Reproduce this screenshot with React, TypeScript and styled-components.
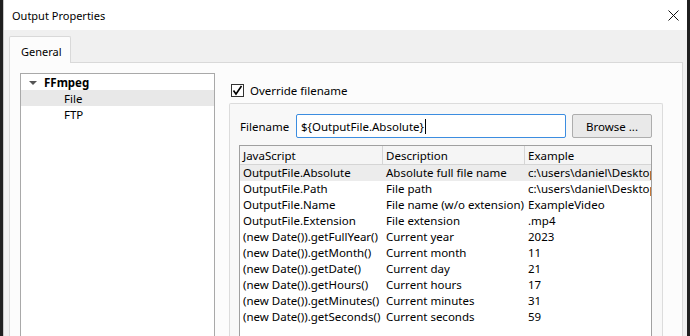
import React from "react";
import styled, { createGlobalStyle } from "styled-components";

const Global = createGlobalStyle`
  html, body { margin: 0; padding: 0; background: #1f1f1f; }
  body { font-family: "Noto Sans", "Open Sans", sans-serif; font-size: 11.5px; color: #000; }
`;

const Dialog = styled.div`
  margin-left: 3px;
  width: 684px;
  height: 336px;
  overflow: hidden;
  display: flex;
  flex-direction: column;
  background: #f0f0f0;
  border-left: 1px solid #c8c8c8;
  box-sizing: border-box;
`;

const TitleBar = styled.div`
  height: 30px;
  flex: none;
  background: #ffffff;
  display: flex;
  align-items: center;
  justify-content: space-between;
  padding: 0 8px 0 8px;
  font-size: 11px;
`;

const Close = styled.svg`
  width: 11px;
  height: 11px;
`;

const Body = styled.div`
  flex: 1;
  display: flex;
  flex-direction: column;
  padding: 6px 4px 0 5px;
  min-height: 0;
`;

const TabBar = styled.div`
  display: flex;
  height: 26px;
  flex: none;
`;

const Tab = styled.div`
  width: 62px;
  height: 27px;
  box-sizing: border-box;
  border: 1px solid #d9d9d9;
  border-bottom: none;
  border-radius: 2px 2px 0 0;
  background: #fcfcfc;
  display: flex;
  align-items: center;
  padding-left: 11px;
  padding-top: 2px;
  font-size: 11px;
  position: relative;
  z-index: 1;
`;

const Pane = styled.div`
  flex: 1;
  border: 1px solid #d9d9d9;
  border-bottom: none;
  background: #fcfcfc;
  display: flex;
  padding: 10px 0 0 10px;
  gap: 14px;
  min-height: 0;
`;

const Tree = styled.div`
  width: 195px;
  flex: none;
  background: #ffffff;
  border: 1px solid #a9a9a9;
  border-bottom: none;
  box-sizing: border-box;
  padding-top: 0;
`;

const TreeRow = styled.div<{ $level: number; $selected?: boolean; $bold?: boolean }>`
  height: 16px;
  line-height: 16px;
  display: flex;
  align-items: center;
  padding-left: ${(p) => 23 + p.$level * 20}px;
  padding-top: 1px;
  box-sizing: border-box;
  background: ${(p) => (p.$selected ? "#e8e8e8" : "transparent")};
  font-weight: ${(p) => (p.$bold ? 700 : 400)};
  position: relative;
`;

const Arrow = styled.span`
  position: absolute;
  left: 8px;
  top: 7px;
  width: 0;
  height: 0;
  border-left: 4px solid transparent;
  border-right: 4px solid transparent;
  border-top: 4px solid #555;
`;

const Right = styled.div`
  width: 434px;
  flex: none;
  display: flex;
  flex-direction: column;
`;

const CheckRow = styled.label`
  display: flex;
  align-items: center;
  height: 14px;
  margin: 10px 0 6px 2px;
  gap: 6px;
`;

const CheckBox = styled.span`
  width: 13px;
  height: 13px;
  box-sizing: border-box;
  border: 1px solid #333;
  background: #fff;
  display: flex;
  align-items: center;
  justify-content: center;
`;

const Frame = styled.div`
  flex: 1;
  border: 1px solid #dcdcdc;
  border-bottom: none;
  border-radius: 2px 2px 0 0;
  background: #f8f8f8;
  padding: 10px 10px 0 9px;
  display: flex;
  flex-direction: column;
  gap: 7px;
`;

const FileRow = styled.div`
  display: flex;
  align-items: center;
  gap: 6px;
  height: 24px;
`;

const Label = styled.span`
  width: 50px;
  padding-left: 1px;
`;

const Input = styled.div`
  width: 270px;
  height: 24px;
  box-sizing: border-box;
  border: 1px solid #3c8de0;
  border-radius: 2px;
  background: #fff;
  display: flex;
  align-items: center;
  padding-left: 4px;
`;

const Caret = styled.span`
  width: 1px;
  height: 15px;
  background: #000;
  margin-left: 1px;
`;

const Button = styled.div`
  width: 80px;
  height: 24px;
  box-sizing: border-box;
  border: 1px solid #adadad;
  border-radius: 2px;
  background: #e9e9e9;
  display: flex;
  align-items: center;
  justify-content: center;
`;

const Table = styled.div`
  flex: 1;
  border: 1px solid #a0a0a0;
  border-bottom: none;
  background: #fff;
  display: flex;
  flex-direction: column;
`;

const Header = styled.div`
  display: grid;
  grid-template-columns: 143px 142px 1fr;
  height: 18px;
  border-bottom: 1px solid #d5d5d5;
  background: #f5f5f5;
`;

const HeadCell = styled.div`
  border-right: 1px solid #d5d5d5;
  padding-left: 3px;
  display: flex;
  align-items: center;
  &:last-child { border-right: none; }
`;

const Row = styled.div<{ $selected?: boolean }>`
  display: grid;
  grid-template-columns: 143px 142px 1fr;
  height: 16px;
  line-height: 16px;
  background: ${(p) => (p.$selected ? "#ececec" : "transparent")};
`;

const Cell = styled.div`
  padding-left: 3px;
  white-space: nowrap;
  overflow: hidden;
`;

const rows: [string, string, string][] = [
  ["OutputFile.Absolute", "Absolute full file name", "c:\\users\\daniel\\Desktop"],
  ["OutputFile.Path", "File path", "c:\\users\\daniel\\Desktop"],
  ["OutputFile.Name", "File name (w/o extension)", "ExampleVideo"],
  ["OutputFile.Extension", "File extension", ".mp4"],
  ["(new Date()).getFullYear()", "Current year", "2023"],
  ["(new Date()).getMonth()", "Current month", "11"],
  ["(new Date()).getDate()", "Current day", "21"],
  ["(new Date()).getHours()", "Current hours", "17"],
  ["(new Date()).getMinutes()", "Current minutes", "31"],
  ["(new Date()).getSeconds()", "Current seconds", "59"],
];

export default function App() {
  return (
    <>
      <Global />
      <Dialog>
        <TitleBar>
          <span>Output Properties</span>
          <Close viewBox="0 0 11 11">
            <path d="M0.5 0.5 L10.5 10.5 M10.5 0.5 L0.5 10.5" stroke="#111" strokeWidth="1" />
          </Close>
        </TitleBar>
        <Body>
          <TabBar>
            <Tab>General</Tab>
          </TabBar>
          <Pane>
            <Tree>
              <TreeRow $level={0} $bold>
                <Arrow />
                FFmpeg
              </TreeRow>
              <TreeRow $level={1} $selected>File</TreeRow>
              <TreeRow $level={1}>FTP</TreeRow>
            </Tree>
            <Right>
              <CheckRow>
                <CheckBox>
                  <svg width="11" height="11" viewBox="0 0 11 11">
                    <path d="M1.5 5.5 L4 9 L9.5 1" stroke="#000" strokeWidth="1.6" fill="none" />
                  </svg>
                </CheckBox>
                Override filename
              </CheckRow>
              <Frame>
                <FileRow>
                  <Label>Filename</Label>
                  <Input>
                    {"${OutputFile.Absolute}"}
                    <Caret />
                  </Input>
                  <Button>Browse ...</Button>
                </FileRow>
                <Table>
                  <Header>
                    <HeadCell>JavaScript</HeadCell>
                    <HeadCell>Description</HeadCell>
                    <HeadCell>Example</HeadCell>
                  </Header>
                  {rows.map((r, i) => (
                    <Row key={i} $selected={i === 0}>
                      <Cell>{r[0]}</Cell>
                      <Cell>{r[1]}</Cell>
                      <Cell>{r[2]}</Cell>
                    </Row>
                  ))}
                </Table>
              </Frame>
            </Right>
          </Pane>
        </Body>
      </Dialog>
    </>
  );
}
